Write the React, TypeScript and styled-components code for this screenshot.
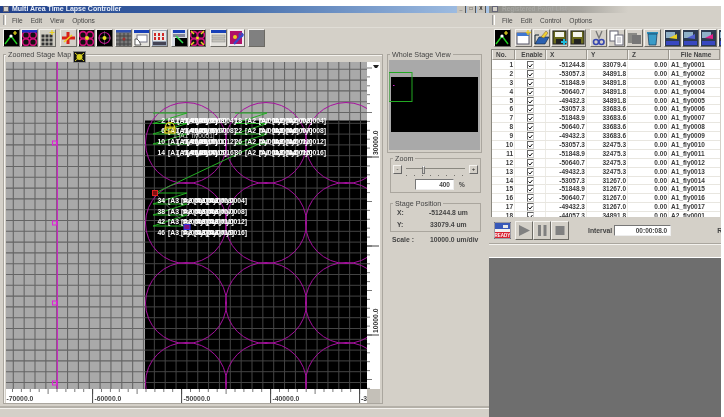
import React from "react";
import styled, { createGlobalStyle } from "styled-components";

const Global = createGlobalStyle`
  html, body { margin: 0; padding: 0; background: #fff; overflow: hidden; }
  #root { width: 724px; height: 417px; }
  * { box-sizing: border-box; }
`;

const Desktop = styled.div`
  width: 724px; height: 417px; padding: 6px 3px 0 0; background: #fff;
  display: flex; font-family: "Liberation Sans", Arial, sans-serif; font-size: 6.5px; color: #333;
  filter: blur(0.4px); overflow: hidden;
`;
const LeftWindow = styled.div`
  width: 489px; height: 411px; background: #d4d0c8; display: flex; flex-direction: column;
`;
const RightColumn = styled.div`
  width: 232px; height: 411px; background: #6e6e6e; display: flex; flex-direction: column;
`;
const RightWindow = styled.div`
  height: 252px; background: #d4d0c8; display: flex; flex-direction: column; border-bottom: 1px solid #fff;
`;
const TitleBar = styled.div<{ $active?: boolean }>`
  height: 7px; flex: none; display: flex; align-items: flex-start; overflow: hidden; padding: 0 3px 0 3px;
  background: ${(p) => (p.$active ? "linear-gradient(90deg,#21408a,#3f68a8 45%,#a9c6e8)" : "linear-gradient(90deg,#8e8e88,#a8a6a0 40%,#d4d0c8 60%)")};
`;
const TitleIcon = styled.span<{ $mr: number }>`
  width: 6px; height: 6px; flex: none; background: #d4d0c8; border: 1px solid #667; margin-right: ${(p) => p.$mr}px;
`;
const TitleText = styled.span<{ $active?: boolean }>`
  font-size: ${(p) => (p.$active ? 7 : 6.5)}px; line-height: 5px; font-weight: 700; white-space: nowrap;
  color: ${(p) => (p.$active ? "#e8eef8" : "#a8a8a4")}; flex: 1; height: 7px;
`;
const WinButton = styled.span`
  width: 9px; height: 7px; flex: none; margin-left: 1px; background: #c8c4bc; color: #222; border-right: 1px solid #555;
  font-size: 5px; line-height: 5px; font-weight: 700; text-align: center;
`;
const MenuBar = styled.div`
  height: 15px; flex: none; display: flex; align-items: center; gap: 8px; padding-left: 3px;
  font-size: 6.6px; color: #444; border-bottom: 1px solid #e0ddd6;
`;
const Gripper = styled.span<{ $mr: number }>`
  width: 3px; height: 10px; flex: none; margin-right: ${(p) => p.$mr}px; border-left: 1px solid #999; border-right: 1px solid #fff;
`;
const Toolbar = styled.div<{ $left: number }>`
  height: 21px; flex: none; display: flex; align-items: flex-start; padding: 1px 0 0 ${(p) => p.$left}px; overflow: hidden;
`;
const ToolGroup = styled.div<{ $gap?: number }>`
  display: flex; gap: 1px; margin-left: ${(p) => p.$gap ?? 0}px; flex: none;
`;
const ToolButton = styled.div`
  width: 17px; height: 18px; flex: none; border: 1px solid; border-color: #f4f2ee #6c6a64 #6c6a64 #f4f2ee; background: #d4d0c8;
  svg { display: block; width: 15px; height: 16px; }
`;
const FlatGrey = styled(ToolButton)`
  background: #808080;
`;
const Main = styled.div`
  flex: 1; min-height: 0; display: flex; padding: 5px 0 0 3px; border-bottom: 2px solid #b4b0a8;
`;
const MapGroup = styled.div`
  width: 380px; height: 350px; flex: none; border: 1px solid #aaa69e; position: relative; padding: 7px 0 0 2px;
  box-shadow: inset 1px 1px 0 #f4f2ee;
`;
const Legend = styled.span`
  position: absolute; top: -5px; left: 2px; background: #d4d0c8; padding: 0 2px; font-size: 7.2px; line-height: 9px; color: #444; white-space: nowrap; font-weight: 500;
`;
const MapBadge = styled.span`
  position: absolute; left: 69px; top: -4px; width: 13px; height: 12px; background: #222; border: 1px solid #888;
  svg { display: block; width: 11px; height: 10px; }
`;
const MapRow = styled.div`
  display: flex; height: 327px;
`;
const RulerRow = styled.div`
  display: flex; height: 14px;
`;
const Corner = styled.div`
  width: 13px; height: 14px; background: #c4c0b8;
`;
const Svg = styled.svg`
  display: block; flex: none;
`;
const Side = styled.div`
  width: 99px; flex: none; margin-left: 4px; display: flex; flex-direction: column;
`;
const PreviewGroup = styled.div`
  height: 99px; width: 95px; flex: none; border: 1px solid #aaa69e; position: relative; padding: 5px 0 0 1px;
`;
const ZoomGroup = styled.div`
  height: 35px; width: 91px; margin: 5px 0 0 3px; border: 1px solid #aaa69e; position: relative; padding: 6px 2px 0 2px;
`;
const StageGroup = styled.div`
  height: 29px; width: 91px; margin: 10px 0 0 3px; border: 1px solid #aaa69e; position: relative; padding: 3px 0 0 6px;
`;
const SliderRow = styled.div`
  display: flex; align-items: flex-start; height: 11px;
`;
const StepButton = styled.span`
  width: 9px; height: 9px; flex: none; border: 1px solid; border-color: #f4f2ee #666 #666 #f4f2ee; text-align: center;
  font-size: 6px; line-height: 6px; color: #222;
`;
const Track = styled.div`
  flex: 1; height: 8px; margin: 3px 4px 0; position: relative; border-top: 1px solid #8a8880;
  background: repeating-linear-gradient(90deg,#77756f 0 1px,transparent 1px 8px) 0 6px / 100% 1px no-repeat;
`;
const Thumb = styled.span`
  position: absolute; left: 16px; top: -3px; width: 3px; height: 8px; background: #d4d0c8; border: 1px solid #777; border-top-color: #fff;
`;
const ZoomValueRow = styled.div`
  display: flex; align-items: center; margin: 3px 0 0 22px; gap: 5px; font-weight: 700; color: #444;
`;
const Field = styled.div<{ $w: number }>`
  width: ${(p) => p.$w}px; height: 11px; flex: none; background: #fff; border: 1px solid; border-color: #777 #eee #eee #777;
  text-align: right; padding-right: 3px; font-size: 6.5px; line-height: 9px; font-weight: 700; color: #444;
`;
const Line = styled.div`
  display: flex; font-size: 6.8px; line-height: 12px; font-weight: 700; color: #444; white-space: nowrap;
`;
const LineLabel = styled.span<{ $w: number }>`
  width: ${(p) => p.$w}px; flex: none;
`;
const ScaleLine = styled(Line)`
  margin: 2px 0 0 5px; line-height: 11px;
`;
const StatusBar = styled.div`
  height: 9px; flex: none; border-top: 1px solid #f4f2ee;
`;
const TableWrap = styled.div`
  margin: 0 1px 0 2px; height: 168px; flex: none; background: #fff; overflow: hidden; border-left: 1px solid #8a8880; border-top: 1px solid #8a8880;
`;
const grid = "23px 31px 41px 41px 41px 1fr";
const HeadRow = styled.div`
  display: grid; grid-template-columns: ${grid}; height: 10px; background: #d4d0c8; margin-bottom: 1px;
`;
const HeadCell = styled.div<{ $center?: boolean }>`
  border-right: 1px solid #9a968e; border-bottom: 1px solid #9a968e; border-left: 1px solid #f4f2ee;
  font-size: 6.5px; line-height: 9px; font-weight: 700; color: #444; padding-left: 3px; text-align: ${(p) => (p.$center ? "center" : "left")};
`;
const Row = styled.div`
  display: grid; grid-template-columns: ${grid}; height: 8.9px; border-bottom: 1px solid #e8e6e0; font-size: 6.5px; line-height: 8px; font-weight: 700; color: #3a3a3a;
`;
const Num = styled.div`
  text-align: right; padding-right: 1px; border-right: 1px solid #ecebe6; white-space: nowrap; overflow: hidden;
`;
const CheckCell = styled.div`
  border-right: 1px solid #ecebe6; display: flex; justify-content: center; align-items: flex-start;
`;
const Check = styled.span`
  width: 7px; height: 8px; border: 1px solid; border-color: #666 #ccc #ccc #666; background: #fff;
  svg { display: block; width: 5px; height: 5px; margin-top: 1px; }
`;
const NameCell = styled.div`
  padding-left: 2px; white-space: nowrap;
`;
const Controls = styled.div`
  height: 27px; flex: none; display: flex; align-items: center; padding-left: 5px; overflow: hidden; border-bottom: 1px solid #aaa69e;
`;
const ReadyIcon = styled.div`
  width: 17px; height: 17px; flex: none; margin-right: 4px;
  svg { display: block; width: 17px; height: 17px; }
`;
const MediaButton = styled.div`
  width: 18px; height: 19px; flex: none; border: 1px solid; border-color: #f4f2ee #6c6a64 #6c6a64 #f4f2ee;
  svg { display: block; width: 16px; height: 17px; }
`;
const IntervalLabel = styled.span`
  margin: 0 2px 0 19px; font-size: 6.8px; font-weight: 700; color: #444;
`;
const RLabel = styled.span`
  margin-left: 46px; font-size: 7px; font-weight: 700; color: #444;
`;
const RightStatus = styled.div`
  height: 12px; flex: none; border-top: 1px solid #f4f2ee;
`;

/* ---------- toolbar drawings ---------- */
const V = ({ children }: { children: React.ReactNode }) => <svg viewBox="0 0 15 16">{children}</svg>;
const Lattice = ({ bar }: { bar?: boolean }) => (
  <>
    <rect width="15" height="16" fill="#111" />
    {[[4, 5], [11, 5], [4, 12], [11, 12]].map(([x, y]) => (
      <circle key={`${x}${y}`} cx={x} cy={y} r="3.4" fill="none" stroke="#d0107a" strokeWidth="1.6" />
    ))}
    {bar && <rect width="15" height="2.5" fill="#2030c0" />}
  </>
);
const Route = () => (
  <V>
    <rect width="15" height="16" fill="#000" />
    <path d="M1 14 7 6l6 8" fill="none" stroke="#20d020" strokeWidth="1.4" />
    <circle cx="7" cy="6" r="1.6" fill="#fff" />
    <path d="M11 1v4M9 3h4" stroke="#f0e020" strokeWidth="1.2" />
  </V>
);
const WinBar = ({ children }: { children?: React.ReactNode }) => (
  <V>
    <rect width="15" height="16" fill="#e4e2dc" />
    <rect width="15" height="3" fill="#1840b8" />
    {children}
  </V>
);
const Floppy = ({ plus }: { plus?: boolean }) => (
  <V>
    <rect x="1" y="1" width="13" height="13" fill="#6a6a1c" stroke="#222" />
    <rect x="3" y="2" width="9" height="5" fill="#f4f4ec" />
    <rect x="4" y="9" width="7" height="5" fill="#222" />
    {plus && <path d="M12 9v6M9 12h6" stroke="#20b8d8" strokeWidth="2" />}
  </V>
);
const Status = ({ c }: { c: string }) => (
  <V>
    <rect width="15" height="16" fill="#2c3a50" />
    <rect x="1" y="2" width="9" height="6" fill="#8fb0c8" />
    <path d="M4 8 12 4v5z" fill={c} />
    <rect x="1" y="11" width="13" height="4" fill="#3848c0" />
  </V>
);

const leftGroups: { gap: number; icons: React.ReactNode[] }[] = [
  {
    gap: 0,
    icons: [
      <Route />,
      <V><Lattice bar /></V>,
      <V>
        <rect width="15" height="16" fill="#cfccc2" />
        {[3, 7, 11].map((x) => [6, 10, 14].map((y) => <rect key={`${x}-${y}`} x={x - 1.5} y={y - 1.5} width="3" height="3" fill="#333" />))}
        <path d="M12 0v5M9.5 2.5h5" stroke="#e8d020" strokeWidth="1.2" />
      </V>,
    ],
  },
  {
    gap: 4,
    icons: [
      <V>
        <rect width="15" height="16" fill="#d4d0c8" />
        <path d="M7 2v12M1 8h13" stroke="#d82018" strokeWidth="3" />
        <path d="M3 12 11 5" stroke="#f0d020" strokeWidth="1.5" />
      </V>,
      <V><Lattice /><circle cx="8" cy="8" r="2" fill="#e8e020" /></V>,
      <V>
        <rect width="15" height="16" fill="#000" />
        <circle cx="7.5" cy="8" r="5.5" fill="none" stroke="#c01090" strokeWidth="1.2" />
        <path d="M7.5 1v14M1 8h13" stroke="#777" strokeWidth=".6" />
        <circle cx="7.5" cy="8" r="2" fill="#e8e020" />
      </V>,
    ],
  },
  {
    gap: 2,
    icons: [
      <V>
        <rect width="15" height="16" fill="#777" />
        <rect width="15" height="2.5" fill="#3050b0" />
        <path d="M0 6h15M0 10h15M0 14h15M4 3v13M8 3v13M12 3v13" stroke="#444" />
        <circle cx="8" cy="9" r="1.5" fill="#a03030" />
      </V>,
      <WinBar>
        <rect x="3" y="5" width="10" height="7" fill="#fff" stroke="#778" />
        <path d="M1 9v6h6l-2-4-2-2z" fill="#fff" stroke="#222" strokeWidth=".7" />
      </WinBar>,
      <V>
        <rect width="15" height="16" fill="#9aa4b4" />
        <rect x="1" y="1" width="13" height="10" fill="#e8e8e8" />
        {[3, 7, 11].map((x) => [3, 7].map((y) => <rect key={`${x}-${y}`} x={x - 1} y={y} width="2" height="3" fill="#d02828" />))}
        <rect x="1" y="12" width="13" height="3" fill="#445" />
      </V>,
    ],
  },
  {
    gap: 3,
    icons: [
      <V>
        <rect width="15" height="16" fill="#d8dce4" />
        <rect x="1" width="12" height="3" fill="#1840b8" />
        <rect x="1" y="4" width="12" height="3" fill="#889" />
        <rect x="3" y="8" width="12" height="8" fill="#000" />
        <path d="M4 6 11 13" stroke="#30e050" strokeWidth="1.5" />
      </V>,
      <V>
        <Lattice />
        <path d="M1 1 4 4M14 1l-3 3M1 15l3-3M14 15l-3-3" stroke="#e8d020" strokeWidth="1.5" />
        <circle cx="7.5" cy="8" r="1.5" fill="#e8e020" />
      </V>,
    ],
  },
  {
    gap: 4,
    icons: [
      <WinBar>
        <rect x="1" y="5" width="13" height="3" fill="#c4c2ba" stroke="#888" strokeWidth=".5" />
        <rect x="1" y="9" width="13" height="3" fill="#c4c2ba" stroke="#888" strokeWidth=".5" />
      </WinBar>,
      <V>
        <rect width="15" height="16" fill="#f0e8ec" />
        <rect x="1" y="1" width="12" height="13" fill="#b01068" />
        <circle cx="6" cy="7" r="2" fill="#e8d020" />
        <path d="M14 4 5 14" stroke="#3848c8" strokeWidth="2.2" />
        <circle cx="12" cy="5" r="2" fill="none" stroke="#3848c8" strokeWidth="1.2" />
      </V>,
    ],
  },
];

const rightGroups: { gap: number; icons: React.ReactNode[] }[] = [
  { gap: 0, icons: [<Route />] },
  {
    gap: 4,
    icons: [
      <V>
        <rect x="1" y="3" width="12" height="11" fill="#fff" stroke="#556" />
        <rect x="1" y="3" width="12" height="3" fill="#4078d0" />
        <path d="M12 0v5M10 2.5h5" stroke="#e8c820" strokeWidth="1.3" />
      </V>,
      <V>
        <path d="M1 14 5 7h10l-4 7z" fill="#2a60b0" stroke="#123" strokeWidth=".6" />
        <path d="M1 14V5h4" fill="none" stroke="#123" />
        <path d="M7 7 12 1l2 2-4 5z" fill="#f0d030" stroke="#654" strokeWidth=".5" />
      </V>,
      <Floppy plus />,
      <Floppy />,
    ],
  },
  {
    gap: 4,
    icons: [
      <V>
        <path d="M5 1 8 8l3-7" fill="none" stroke="#777" strokeWidth="1.3" />
        <circle cx="5" cy="12" r="2.5" fill="none" stroke="#3848b0" strokeWidth="1.6" />
        <circle cx="10.5" cy="12" r="2.5" fill="none" stroke="#3848b0" strokeWidth="1.6" />
      </V>,
      <V>
        <rect x="1" y="1" width="8" height="10" fill="#fff" stroke="#667" />
        <rect x="6" y="5" width="8" height="10" fill="#fff" stroke="#667" />
        <path d="M8 8h4M8 10h4M8 12h4" stroke="#889" strokeWidth=".7" />
      </V>,
      <V>
        <rect x="1" y="3" width="9" height="10" fill="#8a8a86" />
        <rect x="5" y="5" width="9" height="9" fill="#777" />
      </V>,
      <V>
        <rect x="2" y="2" width="11" height="2" fill="#2b8cb8" />
        <path d="M3 4h9l-1 11H4z" fill="#3a9cc8" stroke="#135" strokeWidth=".7" />
      </V>,
    ],
  },
  {
    gap: 3,
    icons: [<Status c="#e8d020" />, <Status c="#5060d0" />, <Status c="#e0208a" />, <Status c="#e8d020" />],
  },
];

/* ---------- stage map ---------- */
const range = (n: number) => Array.from({ length: n }, (_, i) => i);
const vLines = range(34).map((i) => 2.45 + 10.85 * i);
const hLines = range(31).map((i) => 69.3 + 10.8 * i);
const circleCols = [186, 266, 346];
const circleRows = [143, 223, 303, 383];

const Overlap = ({ num, end, x, y, width, prefix }: { num: number; end: number; x: number; y: number; width: number; prefix: string }) => (
  <g fill="#fff" fontSize="6.8" fontFamily="Liberation Sans, sans-serif" fontWeight="700">
    <text x={x - 3} y={y} textAnchor="end">{num}</text>
    {range(4).map((i) => (
      <text key={i} x={x + (i * (width - 36)) / 3} y={y}>{`[${prefix}_fly${String(i + end - 3).padStart(4, "0")}]`}</text>
    ))}
  </g>
);

const zig = (x1: number, x2: number, ys: number[]) =>
  `M${x1} ${ys[0]}H${x2}` + ys.slice(1).map((y) => `L${x1} ${y}H${x2}`).join("");

const StageMap = () => (
  <Svg width={361} height={327} viewBox="6 62 361 327">
    <rect x="6" y="62" width="361" height="327" fill="#a9a9a9" />
    {vLines.map((x) => <line key={x} x1={x} x2={x} y1="62" y2="389" stroke="#656565" strokeWidth="1.1" />)}
    {hLines.map((y) => <line key={y} x1="6" x2="367" y1={y} y2={y} stroke="#656565" strokeWidth="1.1" />)}
    <rect x="145" y="120.5" width="222" height="268.5" fill="#000" />
    {vLines.filter((x) => x > 145).map((x) => <line key={x} x1={x} x2={x} y1="120.5" y2="389" stroke="#444" />)}
    {hLines.filter((y) => y > 120.5).map((y) => <line key={y} x1="145" x2="367" y1={y} y2={y} stroke="#444" />)}
    <clipPath id="mapclip"><rect x="6" y="62" width="361" height="327" /></clipPath>
    <g clipPath="url(#mapclip)">
      {circleCols.map((cx) => circleRows.map((cy) => (
        <circle key={`${cx}-${cy}`} cx={cx} cy={cy} r="40.5" fill="none" stroke="#a810a0" strokeWidth="1" />
      )))}
    </g>
    <line x1="57.3" x2="57.3" y1="62" y2="389" stroke="#d020c8" strokeWidth="1.2" />
    {[143, 223, 303, 383].map((y) => <rect key={y} x="52.5" y={y - 2} width="4" height="4" fill="none" stroke="#e020d8" />)}
    <g fill="none" stroke="#22b022" strokeWidth="1">
      <path d={zig(153, 187, [113, 123.5, 134, 144])} />
      <path d={zig(235, 267, [113, 123.5, 134, 144])} />
      <path d="M155 193 267 140" />
      <path d={zig(153, 187, [193, 204, 215, 226])} />
    </g>
    <path d="M155 193 187 226" stroke="#888" strokeWidth=".6" />
    <text x="173" y="138" fill="#c8c8c8" fontSize="6.5" fontFamily="Liberation Sans, sans-serif">1 [A1_fly0001]</text>
    {[[2, 4, 123.2], [6, 8, 133.2], [10, 12, 143.8], [14, 16, 154.5]].map(([n, e, y]) => (
      <Overlap key={n} num={n} end={e} x={168} y={y} width={64} prefix="A1" />
    ))}
    {[[18, 4, 123.2], [22, 8, 133.2], [26, 12, 143.8], [30, 16, 154.5]].map(([n, e, y]) => (
      <Overlap key={n} num={n} end={e} x={245} y={y} width={77} prefix="A2" />
    ))}
    {[[34, 4, 203.2], [38, 8, 213.5], [42, 12, 224.2], [46, 16, 235.2]].map(([n, e, y]) => (
      <Overlap key={n} num={n} end={e} x={168} y={y} width={75} prefix="A3" />
    ))}
    <circle cx="170" cy="127" r="4.5" fill="none" stroke="#e8d820" strokeWidth="1.2" />
    <rect x="165" y="128" width="10" height="5" fill="none" stroke="#e8d820" strokeWidth="1.2" />
    <path d="M170 122v10M165 127h10" stroke="#e8d820" strokeWidth=".8" />
    <rect x="152.5" y="190.5" width="5" height="5" fill="#801010" stroke="#e02020" />
    <rect x="184" y="224.5" width="6" height="5" fill="#801080" stroke="#3030e0" />
  </Svg>
);

const RightRuler = () => (
  <Svg width={13} height={327} viewBox="367 62 13 327">
    <rect x="367" y="62" width="13" height="327" fill="#fff" />
    {range(37).map((i) => {
      const y = 68 + 8.9 * i;
      return <line key={i} x1="367" x2={i % 5 === 0 ? 372 : 370} y1={y} y2={y} stroke="#555" strokeWidth=".8" />;
    })}
    <line x1="367" x2="379" y1="157" y2="157" stroke="#444" />
    <line x1="367" x2="379" y1="246" y2="246" stroke="#444" />
    <line x1="367" x2="379" y1="335" y2="335" stroke="#444" />
    <path d="M373 65h6l-2 3h-2z" fill="#222" />
    <g fontSize="6.8" fontWeight="700" fontFamily="Liberation Sans, sans-serif" fill="#333">
      <text transform="translate(378 155) rotate(-90)">30000.0</text>
      <text transform="translate(378 333) rotate(-90)">10000.0</text>
    </g>
  </Svg>
);

const BottomRuler = () => (
  <Svg width={361} height={14} viewBox="6 389 361 14">
    <rect x="6" y="389" width="361" height="14" fill="#fff" />
    {range(41).map((i) => {
      const x = 3.6 + 8.9 * i;
      return <line key={i} x1={x} x2={x} y1="389" y2={i % 5 === 0 ? 394 : 392} stroke="#555" strokeWidth=".8" />;
    })}
    {[3.6, 92.6, 181.6, 270.6, 359.6].map((x) => <line key={x} x1={x} x2={x} y1="389" y2="403" stroke="#444" />)}
    <g fontSize="6.8" fontFamily="Liberation Sans, sans-serif" fontWeight="700" fill="#444">
      <text x="6.5" y="401">-70000.0</text>
      <text x="94.5" y="401">-60000.0</text>
      <text x="183.5" y="401">-50000.0</text>
      <text x="272.5" y="401">-40000.0</text>
      <text x="361" y="401">-3</text>
    </g>
  </Svg>
);

const WholeStage = () => (
  <Svg width={91} height={90} viewBox="389 60 91 90">
    <rect x="389" y="60" width="91" height="90" fill="#a9a9a9" />
    <rect x="391" y="77" width="87" height="55" fill="#000" />
    <rect x="389" y="72.5" width="23" height="29" fill="none" stroke="#22a822" />
    <rect x="393" y="85" width="1.5" height="1" fill="#d020c8" />
  </Svg>
);

const rows: [string, string][] = [
  ["-51244.8", "33079.4"], ["-53057.3", "34891.8"], ["-51848.9", "34891.8"], ["-50640.7", "34891.8"], ["-49432.3", "34891.8"],
  ["-53057.3", "33683.6"], ["-51848.9", "33683.6"], ["-50640.7", "33683.6"], ["-49432.3", "33683.6"], ["-53057.3", "32475.3"],
  ["-51848.9", "32475.3"], ["-50640.7", "32475.3"], ["-49432.3", "32475.3"], ["-53057.3", "31267.0"], ["-51848.9", "31267.0"],
  ["-50640.7", "31267.0"], ["-49432.3", "31267.0"], ["-44057.3", "34891.8"],
];

const renderGroups = (groups: { gap: number; icons: React.ReactNode[] }[]) =>
  groups.map((g, i) => (
    <ToolGroup key={i} $gap={g.gap}>
      {g.icons.map((ic, j) => <ToolButton key={j}>{ic}</ToolButton>)}
    </ToolGroup>
  ));

export default function App() {
  return (
    <>
      <Global />
      <Desktop>
        <LeftWindow>
          <TitleBar $active>
            <TitleIcon $mr={3} />
            <TitleText $active>Multi Area Time Lapse Controller</TitleText>
            <WinButton>_</WinButton><WinButton>□</WinButton><WinButton>X</WinButton>
          </TitleBar>
          <MenuBar>
            <Gripper $mr={-2} /><span>File</span><span>Edit</span><span>View</span><span>Options</span>
          </MenuBar>
          <Toolbar $left={3}>
            {renderGroups(leftGroups)}
            <ToolGroup $gap={3}><FlatGrey /></ToolGroup>
          </Toolbar>
          <Main>
            <MapGroup>
              <Legend>Zoomed Stage Map</Legend>
              <MapBadge>
                <svg viewBox="0 0 11 10">
                  <rect width="11" height="10" fill="#111" />
                  <circle cx="5.5" cy="5" r="3" fill="#d8d020" />
                  <path d="M1 1 10 9M10 1 1 9" stroke="#d8d020" />
                </svg>
              </MapBadge>
              <MapRow><StageMap /><RightRuler /></MapRow>
              <RulerRow><BottomRuler /><Corner /></RulerRow>
            </MapGroup>
            <Side>
              <PreviewGroup>
                <Legend>Whole Stage View</Legend>
                <WholeStage />
              </PreviewGroup>
              <ZoomGroup>
                <Legend>Zoom</Legend>
                <SliderRow>
                  <StepButton>-</StepButton>
                  <Track><Thumb /></Track>
                  <StepButton>+</StepButton>
                </SliderRow>
                <ZoomValueRow><Field $w={39}>400</Field><span>%</span></ZoomValueRow>
              </ZoomGroup>
              <StageGroup>
                <Legend>Stage Position</Legend>
                <Line><LineLabel $w={32}>X:</LineLabel><span>-51244.8 um</span></Line>
                <Line><LineLabel $w={33}>Y:</LineLabel><span>33079.4 um</span></Line>
              </StageGroup>
              <ScaleLine><LineLabel $w={38}>Scale :</LineLabel><span>10000.0 um/div</span></ScaleLine>
            </Side>
          </Main>
          <StatusBar />
        </LeftWindow>
        <RightColumn>
          <RightWindow>
            <TitleBar>
              <TitleIcon $mr={4} />
              <TitleText>Registered Point List</TitleText>
            </TitleBar>
            <MenuBar>
              <Gripper $mr={-1} /><span>File</span><span>Edit</span><span>Control</span><span>Options</span>
            </MenuBar>
            <Toolbar $left={5}>{renderGroups(rightGroups)}</Toolbar>
            <TableWrap>
              <HeadRow>
                <HeadCell>No.</HeadCell>
                <HeadCell $center>Enable</HeadCell>
                <HeadCell>X</HeadCell>
                <HeadCell>Y</HeadCell>
                <HeadCell>Z</HeadCell>
                <HeadCell $center>File Name</HeadCell>
              </HeadRow>
              {rows.map(([x, y], i) => (
                <Row key={i}>
                  <Num>{i + 1}</Num>
                  <CheckCell>
                    <Check>
                      <svg viewBox="0 0 5 5"><path d="M.5 2.5 2 4 4.5 1" fill="none" stroke="#111" strokeWidth="1" /></svg>
                    </Check>
                  </CheckCell>
                  <Num>{x}</Num>
                  <Num>{y}</Num>
                  <Num>0.00</Num>
                  <NameCell>{i < 17 ? `A1_fly${String(i + 1).padStart(4, "0")}` : "A2_fly0001"}</NameCell>
                </Row>
              ))}
            </TableWrap>
            <Controls>
              <ReadyIcon>
                <svg viewBox="0 0 17 17">
                  <rect width="17" height="17" fill="#f0f0f0" stroke="#445" />
                  <rect x="1" y="1" width="15" height="6" fill="#3858b8" />
                  <rect x="9" y="3" width="5" height="3" fill="#e8e8e8" />
                  <rect x="1" y="10" width="15" height="6" fill="#d82030" />
                  <text x="8.5" y="15" fill="#fff" fontSize="4.5" fontWeight="700" textAnchor="middle" fontFamily="Liberation Sans, sans-serif">READY</text>
                </svg>
              </ReadyIcon>
              <MediaButton><svg viewBox="0 0 16 17"><path d="M3 3 14 8.5 3 14z" fill="#808080" /></svg></MediaButton>
              <MediaButton><svg viewBox="0 0 16 17"><path d="M4 3h3v11H4zM9.5 3h3v11h-3z" fill="#808080" /></svg></MediaButton>
              <MediaButton><svg viewBox="0 0 16 17"><rect x="3.5" y="4" width="9" height="9" fill="#808080" /></svg></MediaButton>
              <IntervalLabel>Interval</IntervalLabel>
              <Field $w={57}>00:00:08.0</Field>
              <RLabel>R</RLabel>
            </Controls>
            <RightStatus />
          </RightWindow>
        </RightColumn>
      </Desktop>
    </>
  );
}
